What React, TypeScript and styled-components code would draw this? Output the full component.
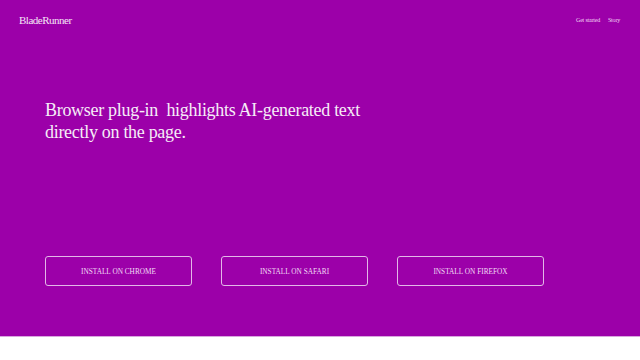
import React from 'react';
import styled, {createGlobalStyle} from 'styled-components';

const GlobalStyle = createGlobalStyle`
  body {
    margin: 0;
    background: #ffffff;
    font-family: "Liberation Serif", "Times New Roman", serif;
  }
`

const Hero = styled.section`
    height: 336px;
    background: #9c00a9;
    border-bottom: 1px solid #d9a6de;
    display: flex;
    flex-direction: column;
    color: #ffffff;
`

const Header = styled.header`
    display: flex;
    justify-content: space-between;
    align-items: center;
    padding: 14px 20px 0 19px;
`

const Logo = styled.div`
    font-size: 11px;
    letter-spacing: -0.5px;
    color: #f4e6f6;
`

const Nav = styled.nav`
    display: flex;
    gap: 8px;
    font-size: 6px;
    letter-spacing: -0.2px;
    color: #f1d8f4;
`

const Headline = styled.h1`
    margin: 73px 0 0 45px;
    font-weight: normal;
    font-size: 18px;
    line-height: 22px;
    letter-spacing: -0.3px;
    color: #f6ecf7;
    white-space: pre-wrap;
`

const Buttons = styled.div`
    display: flex;
    gap: 29px;
    margin: 113px 0 0 45px;
`

const InstallButton = styled.button`
    width: 147px;
    height: 30px;
    background: transparent;
    border: 1px solid #e2b8e7;
    border-radius: 3px;
    color: #f1dcf4;
    font-family: "Liberation Serif", "Times New Roman", serif;
    font-size: 7.3px;
    letter-spacing: 0px;
    text-transform: uppercase;
    cursor: pointer;
`

const App = () => {
    return (
        <>
            <GlobalStyle/>
            <Hero>
                <Header>
                    <Logo>BladeRunner</Logo>
                    <Nav>
                        <span>Get started</span>
                        <span>Story</span>
                    </Nav>
                </Header>
                <Headline>{'Browser plug-in  highlights AI-generated text\ndirectly on the page.'}</Headline>
                <Buttons>
                    <InstallButton>Install on Chrome</InstallButton>
                    <InstallButton>Install on Safari</InstallButton>
                    <InstallButton>Install on Firefox</InstallButton>
                </Buttons>
            </Hero>
        </>
    );
};

export default App;
